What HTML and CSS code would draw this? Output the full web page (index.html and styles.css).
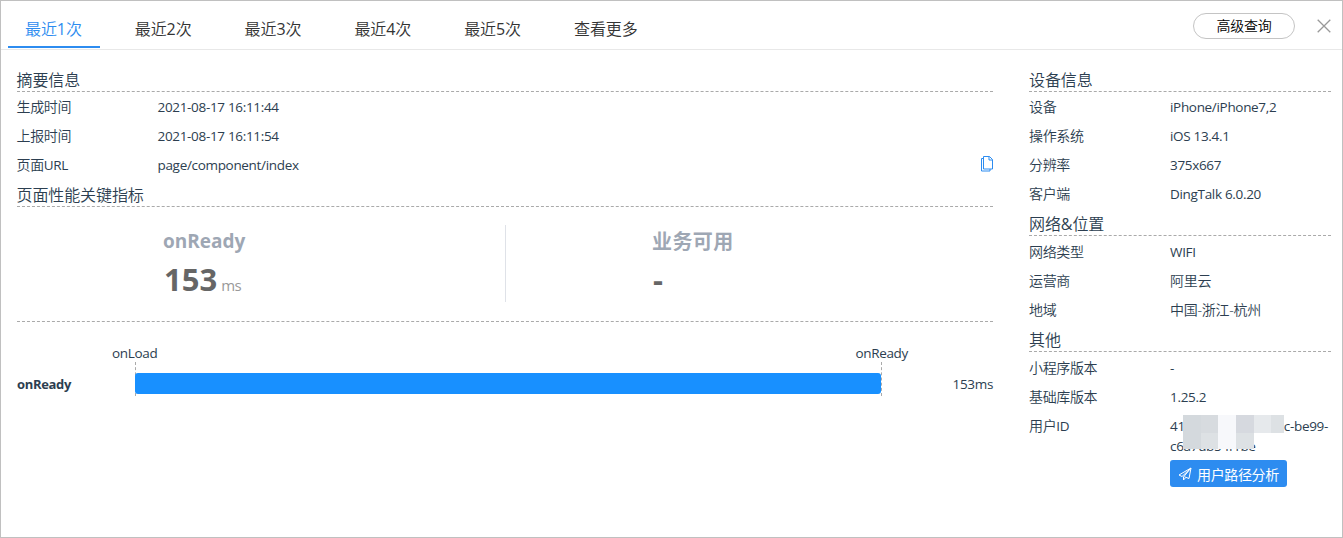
FILE: index.html
```html
<!DOCTYPE html>
<html lang="zh">

<head>
  <meta charset="UTF-8">
  <title>页面性能</title>
  <link rel="stylesheet" href="styles.css">
</head>

<body>
<div class="panel">
  <div class="header">
    <ul class="tabs">
      <li class="tab active">最近<span class="num">1</span>次</li>
      <li class="tab">最近<span class="num">2</span>次</li>
      <li class="tab">最近<span class="num">3</span>次</li>
      <li class="tab">最近<span class="num">4</span>次</li>
      <li class="tab">最近<span class="num">5</span>次</li>
      <li class="tab">查看更多</li>
    </ul>
    <button class="query">高级查询</button>
    <svg class="close" viewBox="0 0 14 14"><path d="M.7 .7L13.3 13.3M13.3 .7L.7 13.3"/></svg>
  </div>

  <div class="content">
    <div class="main">
      <h3 class="title">摘要信息</h3>
      <div class="row"><span class="label">生成时间</span><span class="value">2021-08-17 16:11:44</span></div>
      <div class="row"><span class="label">上报时间</span><span class="value">2021-08-17 16:11:54</span></div>
      <div class="row">
        <span class="label">页面<span class="en">URL</span></span><span class="value">page/component/index</span>
        <svg class="copy" viewBox="0 0 12 16"><path d="M2.500 .5h6l3 3v9.500h-9zM8 .5v3.500h3.500M2.500 2.500h-2v12.500h8.500v-2"/></svg>
      </div>

      <h3 class="title">页面性能关键指标</h3>
      <div class="metrics">
        <div class="metric">
          <div class="metric-name">onReady</div>
          <div class="metric-num">153<span class="unit">ms</span></div>
        </div>
        <div class="metric">
          <div class="metric-name cn">业务可用</div>
          <div class="metric-num">-</div>
        </div>
      </div>

      <div class="chart">
        <div class="chart-name">onReady</div>
        <div class="track">
          <div class="marks"><span class="mark">onLoad</span><span class="mark">onReady</span></div>
          <div class="lines"><div class="bar"></div></div>
        </div>
        <div class="chart-time">153ms</div>
      </div>
    </div>

    <div class="side">
      <h3 class="title">设备信息</h3>
      <div class="row"><span class="label">设备</span><span class="value">iPhone/iPhone7,2</span></div>
      <div class="row"><span class="label">操作系统</span><span class="value">iOS 13.4.1</span></div>
      <div class="row"><span class="label">分辨率</span><span class="value">375x667</span></div>
      <div class="row"><span class="label">客户端</span><span class="value">DingTalk 6.0.20</span></div>

      <h3 class="title">网络<span class="num">&amp;</span>位置</h3>
      <div class="row"><span class="label">网络类型</span><span class="value">WIFI</span></div>
      <div class="row"><span class="label">运营商</span><span class="value cn">阿里云</span></div>
      <div class="row"><span class="label">地域</span><span class="value cn">中国-浙江-杭州</span></div>

      <h3 class="title">其他</h3>
      <div class="row"><span class="label">小程序版本</span><span class="value">-</span></div>
      <div class="row"><span class="label">基础库版本</span><span class="value">1.25.2</span></div>
      <div class="row">
        <span class="label">用户<span class="en">ID</span></span>
        <div class="value user-id">
          <div class="id-line"><span>41</span><span>c-be99-</span></div>
          <div>c6a7db54f1be</div>
          <!-- 打码 -->
          <div class="mosaic">
            <i class="m1"></i><i class="m2"></i><i class="m3"></i><i class="m4"></i><i class="m5"></i><i class="m6"></i>
            <i class="m1"></i><i class="m6"></i><i class="m3"></i><i class="m6"></i>
          </div>
        </div>
      </div>
      <button class="path-btn">
        <svg class="plane" viewBox="0 0 14 14"><path d="M13 1L1 8l3 1.500L13 1L5.500 10v3l2-2.200M13 1l-2 10.500L6.500 9.800"/></svg>
        用户路径分析
      </button>
    </div>
  </div>
</div>
</body>

</html>
```
FILE: styles.css
```css
* {
  box-sizing: border-box;
}
body {
  margin: 0;
  background: #fff;
  color: #2c3e50;
  font-family: "Open Sans", "Noto Sans CJK SC", sans-serif;
  font-size: 14px;
  font-weight: 350;
}
.panel {
  height: 538px;
  border: 1px solid #c0c0c0;
}
.header {
  display: flex;
  height: 49px;
  border-bottom: 1px solid #e8e8e8;
}
.tabs {
  display: flex;
  flex: 1;
  gap: 17.8px;
  margin: 0;
  padding: 0 0 0 7px;
  list-style: none;
}
.tab {
  width: 92px;
  height: 47px;
  padding: 12px 0 0 17px;
  line-height: 32px;
  font-size: 16px;
  letter-spacing: -0.1px;
  color: #333;
  white-space: nowrap;
}
.tab.active {
  color: #2d8cf0;
  border-bottom: 2px solid #2d8cf0;
}
.num {
  font-weight: 400;
}
.query {
  width: 102px;
  height: 26px;
  margin: 12px 22px 0 0;
  padding: 0;
  border: 1px solid #c4c4c4;
  border-radius: 13px;
  background: #fff;
  color: #000;
  font: 350 14px/22px "Open Sans", "Noto Sans CJK SC", sans-serif;
  letter-spacing: -0.3px;
}
.close {
  width: 14px;
  height: 14px;
  margin: 18px 11px 0 0;
  fill: none;
  stroke: #999;
  stroke-width: 1.3;
}
.content {
  display: flex;
  gap: 36px;
  padding: 13.6px 11px 0 16px;
}
.main {
  width: 976px;
}
.side {
  width: 302px;
}
.title {
  height: 28.4px;
  margin: 0;
  padding-top: 4px;
  border-bottom: 1px dashed #aaa;
  font-size: 16px;
  font-weight: 350;
  line-height: 24px;
  letter-spacing: -0.1px;
}
.main .title {
  text-indent: -0.5px;
}
.side .row + .title {
  margin-bottom: 0.4px;
}
.row {
  display: flex;
  padding: 4px 0;
  line-height: 21px;
}
.label {
  width: 141px;
  height: 21px;
  letter-spacing: -0.35px;
}
.main .label {
  width: 140.5px;
  text-indent: -0.5px;
}
.value {
  padding-top: 1px;
  height: 21px;
  font-size: 13.5px;
  font-weight: 400;
  letter-spacing: -0.32px;
}
.value.cn {
  padding-top: 0;
  font-size: 14px;
  font-weight: 350;
  letter-spacing: -0.25px;
}
.en {
  font-size: 13.5px;
  font-weight: 400;
}
.copy {
  width: 12px;
  height: 16px;
  margin: 2px 0 0 auto;
  fill: none;
  stroke: #2d8cf0;
}
.metrics {
  display: flex;
  height: 115px;
  padding-top: 18px;
  border-bottom: 1px dashed #aaa;
}
.metric {
  flex: 1;
  height: 77px;
  padding-left: 146px;
}
.metric:first-child {
  flex: none;
  width: 489px;
  border-right: 1px solid #dfe2e8;
}
.metric-name {
  color: #9ea7b4;
  font-size: 19px;
  font-weight: bold;
  line-height: 32px;
}
.metric-name.cn {
  padding-top: 1px;
  margin-bottom: -1px;
  font-size: 20px;
  letter-spacing: 0.4px;
}
.metric-num {
  padding-left: 1px;
  color: #666;
  font-size: 31px;
  font-weight: bold;
  line-height: 44px;
}
.unit {
  margin-left: 4px;
  color: #999;
  font-size: 15px;
  font-weight: 400;
  letter-spacing: -0.5px;
}
.chart {
  display: flex;
  padding-top: 21px;
  line-height: 20px;
  font-size: 13.5px;
  font-weight: 400;
  letter-spacing: -0.32px;
}
.chart-name {
  width: 118px;
  padding-top: 31px;
  font-size: 13px;
  font-weight: bold;
}
.track {
  width: 747px;
}
.marks {
  display: flex;
  justify-content: space-between;
  height: 19px;
  margin: 0 -26px 0 -23px;
}
.lines {
  height: 34px;
  padding: 11px 0 0;
  border-left: 1px dashed #aaa;
  border-right: 1px dashed #aaa;
}
.bar {
  height: 21px;
  margin: 0 0 0 -1px;
  border-radius: 3px;
  background: #1890ff;
}
.chart-time {
  flex: 1;
  padding-top: 31px;
  text-align: right;
}
.user-id {
  position: relative;
  width: 161px;
  height: 42px;
}
.id-line {
  display: flex;
  justify-content: space-between;
  height: 20px;
  padding-right: 3px;
}
.mosaic {
  position: absolute;
  left: 13px;
  top: 0.4px;
  display: grid;
  grid-template-columns: 18px 17px 18px 18px 17px 13px;
  grid-template-rows: 18px 16px;
}
.m1 {
  background: #d4d9dd;
}
.m2 {
  background: #d7dbdf;
}
.m3 {
  background: #f7f8fb;
}
.m4 {
  background: #d6d9df;
}
.m5 {
  background: #e6e9ec;
}
.m6 {
  background: #dde1e4;
}
.path-btn {
  display: flex;
  align-items: center;
  gap: 5px;
  width: 117px;
  height: 27px;
  margin: -0.6px 0 0 141px;
  padding: 2px 0 0 8px;
  border: 0;
  border-radius: 3px;
  background: #2d8cf0;
  color: #fff;
  font: 14px/27px "Open Sans", "Noto Sans CJK SC", sans-serif;
  letter-spacing: -0.35px;
  white-space: nowrap;
}
.plane {
  width: 14px;
  height: 14px;
  flex: none;
  fill: none;
  stroke: #fff;
}
```
